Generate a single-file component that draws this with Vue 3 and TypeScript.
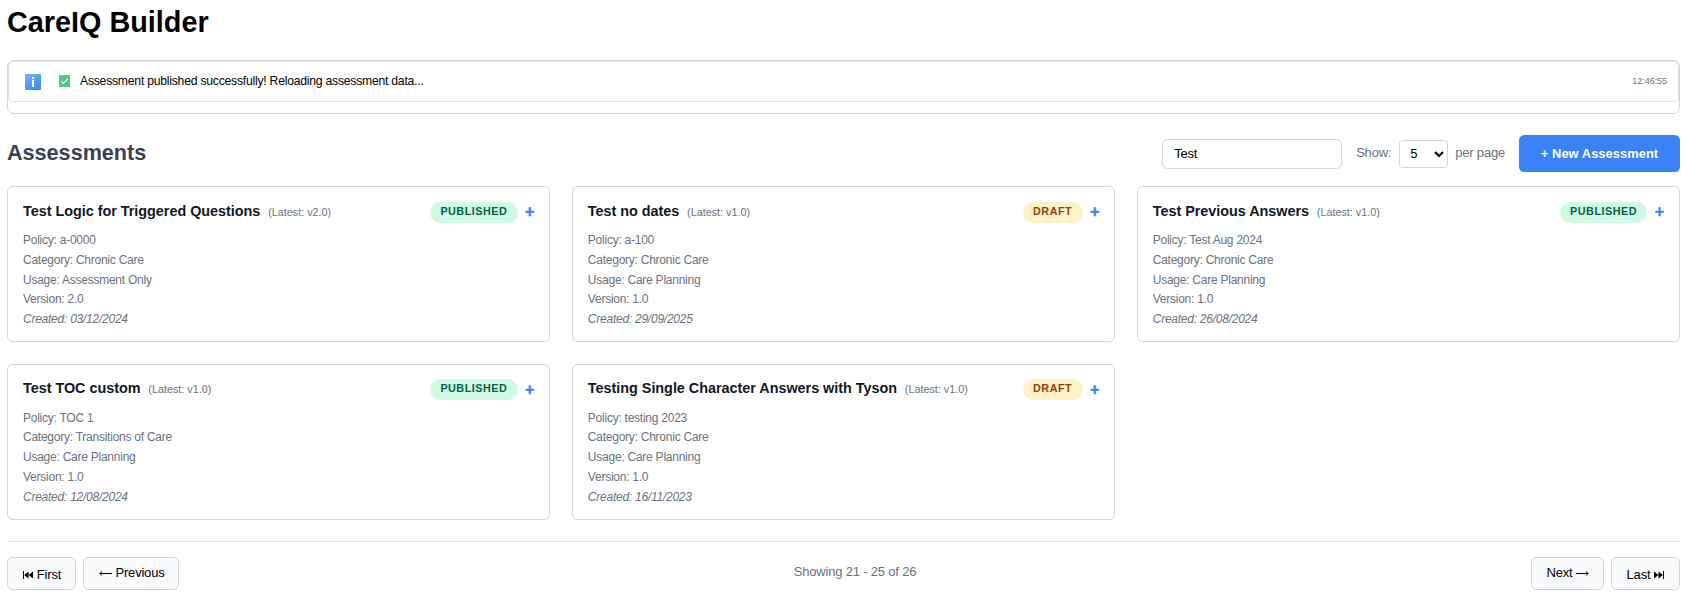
<script setup lang="ts">
import { ref } from 'vue'

interface Assessment {
  title: string
  latest: string
  status: 'published' | 'draft'
  policy: string
  category: string
  usage: string
  version: string
  created: string
}

const search = ref('Test')
const pageSize = ref(5)

const assessments: Assessment[] = [
  { title: 'Test Logic for Triggered Questions', latest: 'v2.0', status: 'published', policy: 'a-0000', category: 'Chronic Care', usage: 'Assessment Only', version: '2.0', created: '03/12/2024' },
  { title: 'Test no dates', latest: 'v1.0', status: 'draft', policy: 'a-100', category: 'Chronic Care', usage: 'Care Planning', version: '1.0', created: '29/09/2025' },
  { title: 'Test Previous Answers', latest: 'v1.0', status: 'published', policy: 'Test Aug 2024', category: 'Chronic Care', usage: 'Care Planning', version: '1.0', created: '26/08/2024' },
  { title: 'Test TOC custom', latest: 'v1.0', status: 'published', policy: 'TOC 1', category: 'Transitions of Care', usage: 'Care Planning', version: '1.0', created: '12/08/2024' },
  { title: 'Testing Single Character Answers with Tyson', latest: 'v1.0', status: 'draft', policy: 'testing 2023', category: 'Chronic Care', usage: 'Care Planning', version: '1.0', created: '16/11/2023' },
]
</script>

<template>
  <main class="page">
    <h1>CareIQ Builder</h1>

    <section class="messages">
      <div class="message">
        <svg class="info" viewBox="0 0 16 16">
          <defs>
            <linearGradient id="info-fill" x1="0" y1="0" x2="0.6" y2="1">
              <stop offset="0" stop-color="#6cb4fb" />
              <stop offset="1" stop-color="#3f8ff0" />
            </linearGradient>
          </defs>
          <rect width="16" height="16" rx="1" fill="url(#info-fill)" />
          <rect x="7" y="3" width="2" height="2" fill="#fff" />
          <rect x="7" y="6" width="2" height="7" fill="#fff" />
        </svg>
        <svg class="check" viewBox="0 0 11 12">
          <rect width="11" height="12" rx="0.6" fill="#4ccb84" />
          <path d="M2.2 6.2 4.4 8.4 8.9 3.8" fill="none" stroke="#fff" stroke-width="1.3" />
        </svg>
        <span class="message-text">Assessment published successfully! Reloading assessment data...</span>
        <time>12:46:55</time>
      </div>
    </section>

    <header class="toolbar">
      <h2>Assessments</h2>
      <input v-model="search" class="search" type="text" />
      <label class="page-size">
        <span>Show:</span>
        <select v-model="pageSize">
          <option :value="5">5</option>
          <option :value="10">10</option>
          <option :value="20">20</option>
        </select>
        <span>per page</span>
      </label>
      <button class="new">+ New Assessment</button>
    </header>

    <section class="grid">
      <article v-for="a in assessments" :key="a.title" class="card">
        <div class="card-head">
          <h3>{{ a.title }}</h3>
          <span class="latest">(Latest: {{ a.latest }})</span>
          <span class="badge" :class="a.status">{{ a.status }}</span>
          <button class="add" aria-label="Add version">+</button>
        </div>
        <p>Policy: {{ a.policy }}</p>
        <p>Category: {{ a.category }}</p>
        <p>Usage: {{ a.usage }}</p>
        <p>Version: {{ a.version }}</p>
        <p class="created">Created: {{ a.created }}</p>
      </article>
    </section>

    <footer class="pager">
      <div class="pager-group">
        <button class="first">
          <svg class="skip" viewBox="0 0 10 8"><path d="M0 0h1v8H0zM5.5 0.5v7L1.2 4zM10 0.5v7L5.6 4z" /></svg>
          <span>First</span>
        </button>
        <button class="previous">
          <svg class="arrow" viewBox="0 0 13 7"><path d="M.8 3.5H13M3.2 1.5 .8 3.5 3.2 5.5" /></svg>
          <span>Previous</span>
        </button>
      </div>
      <span class="range">Showing 21 - 25 of 26</span>
      <div class="pager-group">
        <button class="next">
          <span>Next</span>
          <svg class="arrow" viewBox="0 0 13 7"><path d="M12.2 3.5H0M9.8 1.5 12.2 3.5 9.8 5.5" /></svg>
        </button>
        <button class="last">
          <span>Last</span>
          <svg class="skip" viewBox="0 0 10 8"><path d="M9 0h1v8H9zM4.5 0.5v7L8.8 4zM0 0.5v7L4.4 4z" /></svg>
        </button>
      </div>
    </footer>
  </main>
</template>

<style>
body {
  background: #fff;
}
</style>

<style scoped>
.page,
.page * {
  box-sizing: border-box;
  font-family: Arial, 'Liberation Sans', sans-serif;
}
.page {
  padding: 5px 7px 0;
}
h1,
h2,
h3,
p {
  margin: 0;
}
h1 {
  font-size: 28.8px;
  line-height: 34px;
}
.messages {
  height: 54px;
  margin-top: 21px;
  border: 1px solid #d1d5db;
  border-radius: 7px;
}
.message {
  display: flex;
  align-items: center;
  height: 41px;
  padding: 0 11px 0 16px;
  border: 1px solid #e0e1e4;
  border-radius: 5px;
}
.info {
  width: 16px;
  height: 16px;
}
.check {
  width: 11px;
  height: 12px;
  margin: 0 0 1px 18px;
}
.message-text {
  flex: 1;
  margin: 0 0 2px 10px;
  font-size: 12.2px;
  line-height: 16px;
  letter-spacing: -0.235px;
}
time {
  margin-bottom: 2px;
  font-size: 9px;
  letter-spacing: -0.05px;
  color: #6b7280;
}
.toolbar {
  display: flex;
  align-items: center;
  height: 37px;
  margin-top: 21px;
}
h2 {
  flex: 1;
  margin-bottom: 2px;
  font-size: 21.6px;
  line-height: 26px;
  color: #374151;
}
.search {
  width: 180px;
  height: 30px;
  padding: 0 11px;
  border: 1px solid #d1d5db;
  border-radius: 5.4px;
  font-size: 13px;
  letter-spacing: -0.2px;
  color: #000;
}
.page-size {
  display: flex;
  align-items: center;
  gap: 7px;
  margin: 0 14px;
  font-size: 13px;
  letter-spacing: -0.2px;
  color: #6b7280;
}
.page-size span {
  margin-bottom: 2px;
}
.page-size span:first-child {
  margin-right: 1px;
}
select {
  width: 49px;
  height: 28px;
  padding: 0 3px 0 6px;
  border: 1px solid #d1d5db;
  border-radius: 3.6px;
  background: #fff;
  font-size: 13px;
  color: #000;
}
.new {
  width: 161px;
  height: 37px;
  padding: 0;
  border: 0;
  border-radius: 5.4px;
  background: #3b82f6;
  color: #fff;
  font-size: 12.9px;
  font-weight: 700;
  letter-spacing: 0.04px;
}
.grid {
  display: grid;
  grid-template-columns: repeat(3, 1fr);
  gap: 21.6px;
  margin-top: 14.1px;
}
.card {
  height: 156px;
  padding: 15px;
  border: 1px solid #d1d5db;
  border-radius: 5.4px;
}
.card-head {
  display: flex;
  align-items: center;
  height: 21px;
  margin: -0.4px 0 8.4px;
}
h3 {
  margin-bottom: 3.4px;
  font-size: 14.4px;
  line-height: 18px;
  letter-spacing: -0.02px;
  color: #111827;
}
.latest {
  flex: 1;
  margin: 0 0 1.4px 7.8px;
  font-size: 10.8px;
  color: #6b7280;
}
.badge {
  height: 21px;
  padding: 0 10.5px;
  border-radius: 11px;
  font-size: 10.8px;
  line-height: 19px;
  font-weight: 700;
  letter-spacing: 0.5px;
  text-transform: uppercase;
}
.badge.published {
  background: #d1fae5;
  color: #065f46;
}
.badge.draft {
  background: #fef3c7;
  color: #92400e;
}
.add {
  width: 10px;
  margin: 0 -0.5px 2.4px 7px;
  padding: 0;
  border: 0;
  background: none;
  color: #3b82f6;
  font-size: 16.2px;
  line-height: 20px;
  font-weight: 700;
  -webkit-text-stroke: 0.4px #3b82f6;
}
.card p {
  font-size: 12px;
  line-height: 19.7px;
  letter-spacing: -0.245px;
  color: #6b7280;
}
.card .created {
  font-style: italic;
}
.pager {
  display: flex;
  justify-content: space-between;
  margin-top: 21px;
  padding-top: 15px;
  border-top: 1px solid #e5e7eb;
}
.pager-group {
  display: flex;
  gap: 7px;
}
.pager button {
  display: flex;
  align-items: center;
  justify-content: center;
  gap: 4px;
  height: 33px;
  padding: 0 0 2px;
  border: 1px solid #d1d5db;
  border-radius: 5.4px;
  background: #f9fafb;
  color: #000;
  font-size: 13px;
  letter-spacing: -0.2px;
}
.pager .first {
  width: 69px;
  padding: 2px 0 0 1px;
}
.pager .previous {
  width: 96px;
  padding-left: 1px;
}
.pager .next {
  width: 73px;
  padding-left: 1px;
}
.pager .last {
  width: 69px;
  padding: 2px 0 0;
}
.skip {
  width: 10px;
  height: 8px;
  margin-top: 1px;
}
.arrow {
  width: 13px;
  height: 7px;
  margin-top: 2px;
  fill: none;
  stroke: #000;
  stroke-width: 1;
}
.range {
  font-size: 13px;
  line-height: 30px;
  letter-spacing: -0.18px;
  color: #6b7280;
}
</style>
